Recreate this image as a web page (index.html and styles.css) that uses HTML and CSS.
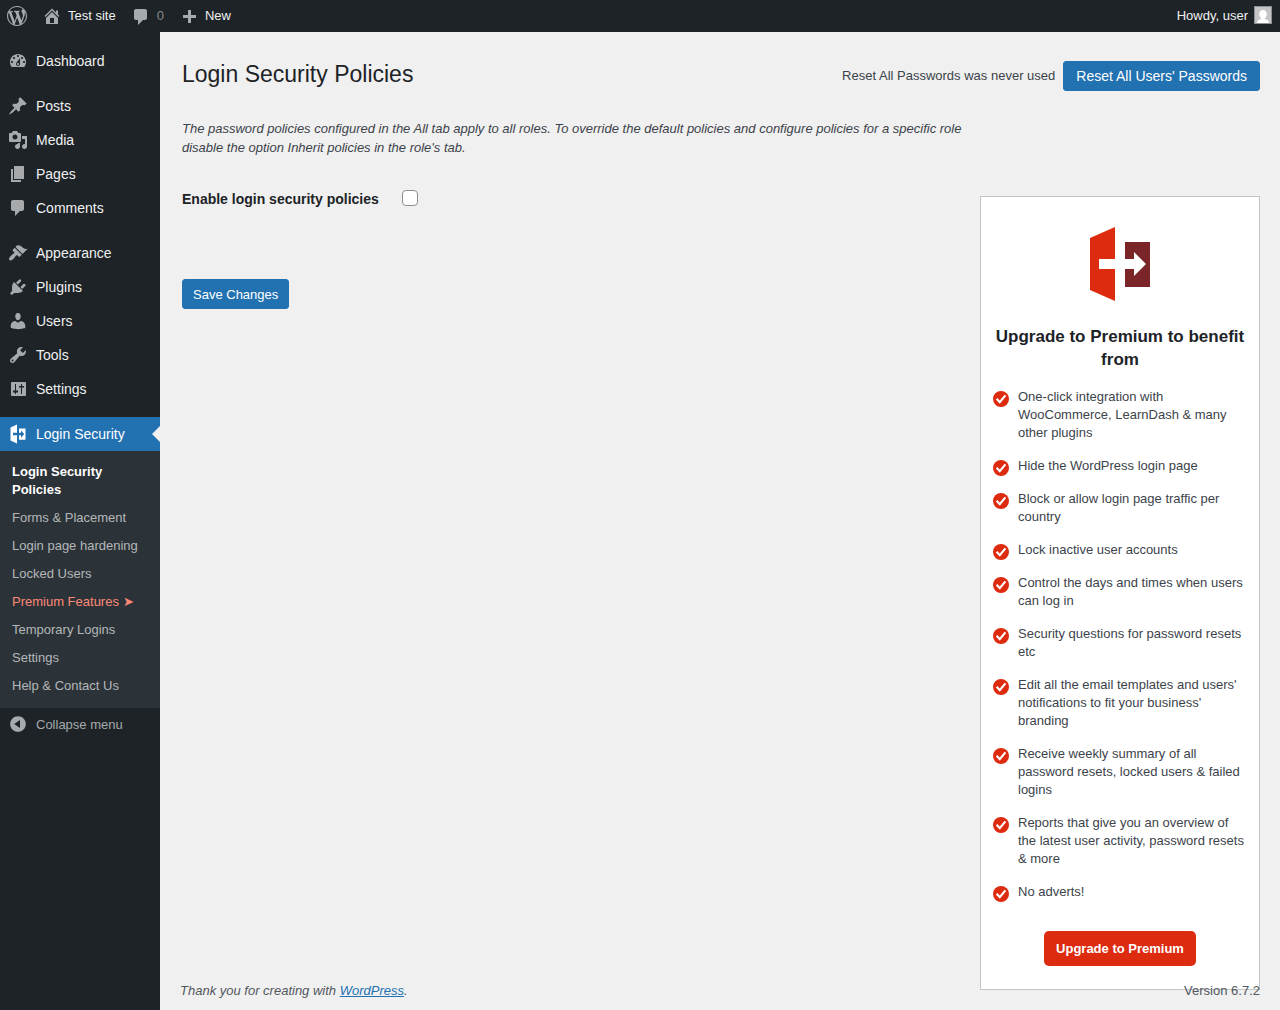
FILE: index.html
```html
<!DOCTYPE html>
<html lang="en">
<head>
    <meta charset="UTF-8">
    <meta name="viewport" content="width=device-width, initial-scale=1.0">
    <title>Login Security Policies - Test site</title>
    <link rel="stylesheet" href="styles.css">
</head>
<body>
    <svg class="sprite" aria-hidden="true">
        <symbol id="check" viewBox="0 0 16 16">
            <circle cx="8" cy="8" r="8" fill="#dd2b10"/>
            <path d="M3.600 7.800l3.200 3.400L12.400 4.400" fill="none" stroke="#fff" stroke-width="2.200"/>
        </symbol>
    </svg>

    <header class="adminbar">
        <nav class="adminbar-left">
            <a href="#" aria-label="About WordPress"><svg viewBox="0 0 20 20"><path d="M20 10c0-5.51-4.49-10-10-10C4.48 0 0 4.49 0 10c0 5.52 4.48 10 10 10 5.51 0 10-4.48 10-10zM7.78 15.37L4.37 6.22c.55-.02 1.17-.08 1.17-.08.5-.06.44-1.13-.06-1.11 0 0-1.45.11-2.37.11-.18 0-.37 0-.58-.01C4.12 2.69 6.87 1.11 10 1.11c2.33 0 4.45.87 6.05 2.34-.68-.11-1.65.39-1.65 1.58 0 .74.45 1.36.9 2.1.35.61.55 1.36.55 2.46 0 1.49-1.4 5-1.4 5l-3.03-8.37c.54-.02.82-.17.82-.17.5-.05.44-1.25-.06-1.22 0 0-1.44.12-2.38.12-.87 0-2.33-.12-2.33-.12-.5-.03-.56 1.2-.06 1.22l.92.08 1.26 3.41zM17.41 10c.24-.64.74-1.87.43-4.25.7 1.29 1.05 2.71 1.05 4.25 0 3.29-1.73 6.24-4.4 7.78.97-2.59 1.94-5.2 2.92-7.78zM6.1 18.09C3.12 16.65 1.11 13.53 1.11 10c0-1.3.23-2.48.72-3.59C3.25 10.3 4.67 14.2 6.1 18.09zm4.03-6.63l2.58 6.98c-.86.29-1.76.45-2.71.45-.79 0-1.57-.11-2.29-.33.81-2.38 1.62-4.74 2.42-7.1z"/></svg></a>
            <a href="#"><svg viewBox="0 0 20 20"><path fill-rule="evenodd" d="M16 8.5l1.53 1.53-1.06 1.06L10 4.6l-6.47 6.49-1.06-1.06L10 2.5l4 4v-2h2v4zm-6-2.46l6 5.99V18H4v-5.97zM12 17v-5H8v5h4z"/></svg>Test site</a>
            <a href="#" class="dim"><svg viewBox="0 -1 20 20"><path d="M5 2h9c1.1 0 2 .9 2 2v7c0 1.1-.9 2-2 2h-2l-5 5v-5H5c-1.1 0-2-.9-2-2V4c0-1.1.9-2 2-2z"/></svg>0</a>
            <a href="#"><svg viewBox="0 0 20 20"><path d="M17 9v3h-5v5H9v-5H4V9h5V4h3v5z"/></svg>New</a>
        </nav>
        <a href="#" class="account">Howdy, user
            <svg viewBox="0 0 18 18"><path fill="#8c8f94" d="M0 0h18v18H0z"/><path fill="#c5c5c7" d="M1 1h16v16H1z"/><path fill="#fff" d="M9 4c2.4 0 3.8 1.7 3.8 4 0 1.700-.8 3.200-1.800 4v1c2 .6 3.500 1.400 4 4H3c.5-2.600 2-3.400 4-4v-1c-1-.8-1.800-2.300-1.800-4C5.200 5.700 6.600 4 9 4z"/></svg>
        </a>
    </header>

    <div class="layout">
        <nav class="adminmenu">
            <a href="#"><svg viewBox="0 0 20 20"><path fill-rule="evenodd" d="M3.76 16h12.48c1.1-1.37 1.76-3.11 1.76-5 0-4.42-3.58-8-8-8s-8 3.58-8 8c0 1.89.66 3.63 1.76 5zM10 4c.55 0 1 .45 1 1s-.45 1-1 1-1-.45-1-1 .45-1 1-1zM6 6c.55 0 1 .45 1 1s-.45 1-1 1-1-.45-1-1 .45-1 1-1zm8 0c.55 0 1 .45 1 1s-.45 1-1 1-1-.45-1-1 .45-1 1-1zm-5.37 5.55L12 7v6c0 1.1-.9 2-2 2s-2-.9-2-2c0-.57.24-1.08.63-1.45zM4 10c.55 0 1 .45 1 1s-.45 1-1 1-1-.45-1-1 .45-1 1-1zm12 0c.55 0 1 .45 1 1s-.45 1-1 1-1-.45-1-1 .45-1 1-1zm-5 3c0-.55-.45-1-1-1s-1 .45-1 1 .45 1 1 1 1-.45 1-1z"/></svg>Dashboard</a>
            <div class="separator"></div>
            <a href="#"><svg viewBox="0 0 20 20"><path d="M10.44 3.02l1.82-1.82 6.36 6.35-1.83 1.82c-1.05-.68-2.48-.57-3.41.36l-.75.75c-.92.93-1.04 2.35-.35 3.41l-1.83 1.82-2.41-2.41-2.8 2.79c-.42.42-3.38 2.71-3.8 2.29s1.86-3.39 2.28-3.81l2.79-2.79L4.1 9.36l1.83-1.82c1.05.69 2.48.57 3.4-.36l.75-.75c.93-.92 1.05-2.35.36-3.41z"/></svg>Posts</a>
            <a href="#"><svg viewBox="0 0 20 20"><path fill-rule="evenodd" d="M13 11V4c0-.55-.45-1-1-1h-1.670L9 1H5L3.670 3H2c-.55 0-1 .45-1 1v7c0 .55.45 1 1 1h10c.55 0 1-.45 1-1zM7 4.500c1.380 0 2.500 1.120 2.500 2.500S8.380 9.500 7 9.500 4.500 8.380 4.500 7 5.620 4.500 7 4.500zM14 6h5v10.500c0 1.380-1.120 2.500-2.500 2.500S14 17.880 14 16.500s1.120-2.500 2.500-2.500c.17 0 .34.02.5.05V9h-3V6zm-4 8.050V13h2v3.500c0 1.380-1.120 2.500-2.500 2.500S7 17.880 7 16.500 8.120 14 9.500 14c.17 0 .34.02.5.05z"/></svg>Media</a>
            <a href="#"><svg viewBox="0 0 20 20"><path d="M6 15V2h10v13H6zm-1 1h8v2H3V5h2v11z"/></svg>Pages</a>
            <a href="#"><svg viewBox="0 0 20 20"><path d="M5 2h9c1.100 0 2 .9 2 2v7c0 1.100-.9 2-2 2h-2l-5 5v-5H5c-1.100 0-2-.9-2-2V4c0-1.100.9-2 2-2z"/></svg>Comments</a>
            <div class="separator"></div>
            <a href="#"><svg viewBox="0 0 20 20"><path d="M14.48 11.06L7.41 3.99l1.5-1.5c.5-.56 2.3-.47 3.51.32 1.21.8 1.43 1.28 2.91 2.1 1.18.64 2.45 1.26 4.45.85zm-.71.71L6.7 4.7 4.93 6.47c-.39.39-.39 1.02 0 1.41l1.06 1.06c.39.39.39 1.03 0 1.42-.6.6-1.43 1.11-2.21 1.69-.35.26-.7.53-1.01.84C1.43 14.23.4 16.08 1.4 17.07c.99 1 2.84-.03 4.18-1.36.31-.31.58-.66.85-1.02.57-.78 1.08-1.61 1.69-2.21.39-.39 1.02-.39 1.41 0l1.06 1.06c.39.39 1.02.39 1.41 0z"/></svg>Appearance</a>
            <a href="#"><svg viewBox="0 0 20 20"><path d="M13.11 4.36L9.87 7.6 8 5.73l3.24-3.24c.35-.34 1.05-.2 1.56.32.52.51.66 1.21.31 1.55zm-8 1.77l.91-1.12 9.01 9.01-1.19.84c-.71.71-2.63 1.16-3.82 1.16H6.14L4.9 17.26c-.59.59-1.54.59-2.12 0-.59-.58-.59-1.53 0-2.12l1.24-1.24v-3.88c0-1.13.4-3.19 1.09-3.89zm7.26 3.97l3.24-3.24c.34-.35 1.04-.21 1.55.31.52.51.66 1.21.31 1.55l-3.24 3.25z"/></svg>Plugins</a>
            <a href="#"><svg viewBox="0 0 20 20"><path d="M10 9.25c-2.27 0-2.73-3.44-2.73-3.44C7 4.02 7.82 2 9.97 2c2.16 0 2.98 2.02 2.71 3.81 0 0-.41 3.44-2.68 3.44zm0 2.57L12.72 10c2.39 0 4.52 2.33 4.52 4.53v2.49s-3.65 1.13-7.24 1.13c-3.65 0-7.24-1.13-7.24-1.13v-2.49c0-2.25 1.94-4.48 4.47-4.48z"/></svg>Users</a>
            <a href="#"><svg viewBox="0 0 20 20"><path fill-rule="evenodd" d="M16.68 9.77c-1.34 1.34-3.3 1.67-4.95.99l-5.41 6.52c-.99.99-2.59.99-3.58 0s-.99-2.59 0-3.57l6.52-5.42c-.68-1.65-.35-3.61.99-4.95 1.28-1.28 3.12-1.62 4.72-1.06l-2.89 2.89 2.82 2.82 2.86-2.87c.53 1.58.18 3.39-1.08 4.65zM3.81 16.21c.4.39 1.04.39 1.43 0 .4-.4.4-1.04 0-1.43-.39-.4-1.03-.4-1.43 0-.39.39-.39 1.03 0 1.43z"/></svg>Tools</a>
            <a href="#"><svg viewBox="0 0 20 20"><path fill-rule="evenodd" d="M4 3h13c.55 0 1 .45 1 1v12c0 .55-.45 1-1 1H4c-.55 0-1-.45-1-1V4c0-.55.45-1 1-1zM7 5v6.500H5v2h2V15h1v-1.500h2v-2H8V5zM13 5v2h-2v1.500h2V15h1V8.500h2V7h-2V5z"/></svg>Settings</a>
            <div class="separator"></div>
            <a href="#" class="current"><svg viewBox="0 0 20 20"><path d="M2.500 3.400L9 .5v8.200H5v2.600h4v8.200L2.500 16.600zM11 4.500h6.500v11.200H11v-4.400h2v2.400l3.200-3.700L13 6.500v2.200h-2z"/></svg>Login Security</a>
            <div class="submenu">
                <a href="#" class="active">Login Security Policies</a>
                <a href="#">Forms &amp; Placement</a>
                <a href="#">Login page hardening</a>
                <a href="#">Locked Users</a>
                <a href="#" class="premium">Premium Features ➤</a>
                <a href="#">Temporary Logins</a>
                <a href="#">Settings</a>
                <a href="#">Help &amp; Contact Us</a>
            </div>
            <button type="button" class="collapse"><svg viewBox="0 0 20 20"><path fill-rule="evenodd" d="M10 2.160c4.330 0 7.840 3.510 7.840 7.840s-3.510 7.840-7.840 7.840S2.160 14.330 2.160 10 5.710 2.160 10 2.160zm2 11.720V6.120L6.180 9.970z"/></svg>Collapse menu</button>
        </nav>

        <main class="content">
            <div class="page-head">
                <h1>Login Security Policies</h1>
                <span>Reset All Passwords was never used</span>
                <button type="button" class="button button-large">Reset All Users' Passwords</button>
            </div>

            <div class="columns">
                <form class="policies">
                    <p class="description">The password policies configured in the All tab apply to all roles. To override the default policies and configure policies for a specific role disable the option Inherit policies in the role's tab.</p>
                    <div class="field">
                        <label for="enable-policies">Enable login security policies</label>
                        <input type="checkbox" id="enable-policies">
                    </div>
                    <button type="submit" class="button">Save Changes</button>
                </form>

                <aside class="upgrade">
                    <svg class="logo" viewBox="0 0 62 76">
                        <path fill="#dd2b10" d="M1 12L26 1v32H10v10h16v32L1 64z"/>
                        <path fill="#7c2529" d="M36 16h25v45H36V43h9v7l12-12-12-12v7h-9z"/>
                    </svg>
                    <h2>Upgrade to Premium to benefit from</h2>
                    <ul>
                        <li><svg><use href="#check"/></svg>One-click integration with WooCommerce, LearnDash &amp; many other plugins</li>
                        <li><svg><use href="#check"/></svg>Hide the WordPress login page</li>
                        <li><svg><use href="#check"/></svg>Block or allow login page traffic per country</li>
                        <li><svg><use href="#check"/></svg>Lock inactive user accounts</li>
                        <li><svg><use href="#check"/></svg>Control the days and times when users can log in</li>
                        <li><svg><use href="#check"/></svg>Security questions for password resets etc</li>
                        <li><svg><use href="#check"/></svg>Edit all the email templates and users' notifications to fit your business' branding</li>
                        <li><svg><use href="#check"/></svg>Receive weekly summary of all password resets, locked users &amp; failed logins</li>
                        <li><svg><use href="#check"/></svg>Reports that give you an overview of the latest user activity, password resets &amp; more</li>
                        <li><svg><use href="#check"/></svg>No adverts!</li>
                    </ul>
                    <a href="#" class="upgrade-button">Upgrade to Premium</a>
                </aside>
            </div>

            <footer>
                <em>Thank you for creating with <a href="#">WordPress</a>.</em>
                <span>Version 6.7.2</span>
            </footer>
        </main>
    </div>
</body>
</html>
```
FILE: styles.css
```css
* {
    box-sizing: border-box;
}
body {
    margin: 0;
    background: #f0f0f0;
    color: #3c434a;
    font: 13px/19px "Liberation Sans", Arial, sans-serif;
}
button {
    font-family: inherit;
    cursor: pointer;
}
.sprite {
    display: none;
}

/* Top bar */
.adminbar {
    display: flex;
    justify-content: space-between;
    height: 32px;
    padding: 0 8px 0 7px;
    background: #1d2327;
    line-height: 32px;
}
.adminbar-left {
    display: flex;
    gap: 15px;
}
.adminbar a {
    display: flex;
    align-items: center;
    gap: 6px;
    color: #f0f0f1;
    text-decoration: none;
}
.adminbar svg {
    width: 20px;
    height: 20px;
    fill: #a7aaad;
}
.adminbar .dim {
    color: #878b8f;
}
.adminbar .account svg {
    width: 18px;
    height: 18px;
    margin-bottom: 2px;
}

/* Side menu */
.layout {
    display: flex;
    min-height: calc(100vh - 32px);
}
.adminmenu {
    flex: 0 0 160px;
    padding-top: 12px;
    background: #1d2327;
}
.adminmenu > a,
.collapse {
    display: flex;
    align-items: center;
    gap: 8px;
    width: 100%;
    height: 34px;
    padding: 0 8px;
    color: #f0f0f1;
    font-size: 14px;
    text-decoration: none;
}
.adminmenu svg {
    width: 20px;
    height: 20px;
    fill: #a7aaad;
}
.separator {
    height: 11px;
}
.adminmenu > .current {
    position: relative;
    background: #2271b1;
    color: #fff;
}
.adminmenu .current svg {
    fill: #fff;
}
.current::after {
    content: "";
    position: absolute;
    top: 9px;
    right: 0;
    border: 8px solid transparent;
    border-left-width: 0;
    border-right-color: #f0f0f0;
}
.submenu {
    padding: 7px 0 8px;
    background: #2c3338;
}
.submenu a {
    display: block;
    padding: 5px 12px;
    color: #b4b7b9;
    line-height: 18px;
    text-decoration: none;
}
.submenu .active {
    color: #fff;
    font-weight: bold;
}
.submenu .premium {
    color: #ff8977;
}
.collapse {
    height: 32px;
    border: none;
    background: none;
    color: #a7aaad;
    font-size: 13px;
}

/* Page */
.content {
    position: relative;
    flex: 1;
    min-width: 0;
    padding: 29px 20px 20px 22px;
}
.page-head {
    display: flex;
    align-items: center;
    gap: 8px;
    margin-bottom: 28px;
    line-height: 18px;
}
h1 {
    flex: 1;
    margin: 0;
    padding-bottom: 4px;
    color: #1d2327;
    font-size: 23px;
    font-weight: normal;
    line-height: 26px;
}
.button {
    height: 30px;
    padding: 0 10px;
    border: 1px solid #2271b1;
    border-radius: 3px;
    background: #2271b1;
    color: #fff;
    font-size: 13px;
}
.button-large {
    padding: 0 12px;
    font-size: 14px;
}
.columns {
    display: flex;
    align-items: flex-start;
    gap: 10px;
}
.policies {
    flex: 1;
}
.description {
    margin: 0 0 33px;
    font-style: italic;
}
.field {
    display: flex;
    align-items: flex-start;
    margin-bottom: 70px;
}
.field label {
    width: 220px;
    color: #1d2327;
    font-size: 14px;
    font-weight: bold;
}
.field input {
    appearance: none;
    width: 16px;
    height: 16px;
    margin: 0;
    border: 1px solid #8c8f94;
    border-radius: 4px;
    background: #fff;
}

/* Upgrade box */
.upgrade {
    width: 280px;
    margin-top: 77px;
    padding: 29px 12px 23px;
    border: 1px solid #c3c4c7;
    background: #fff;
    text-align: center;
}
.logo {
    display: block;
    width: 62px;
    height: 76px;
    margin: 0 auto 23px;
}
h2 {
    margin: 0 0 17px;
    color: #1d2327;
    font-size: 17px;
    line-height: 23px;
}
.upgrade ul {
    display: grid;
    gap: 15px;
    margin: 0 0 30px;
    padding: 0;
    list-style: none;
    line-height: 18px;
    text-align: left;
}
.upgrade li {
    display: flex;
    gap: 9px;
}
.upgrade li svg {
    flex: none;
    width: 16px;
    height: 16px;
    margin: 3px 0 -1px;
}
.upgrade-button {
    display: inline-block;
    padding: 8px 12px;
    border-radius: 5px;
    background: #dd2b10;
    color: #fff;
    font-weight: bold;
    text-decoration: none;
    vertical-align: top;
}

/* The footer lies over the bottom of the page content */
footer {
    position: absolute;
    right: 0;
    bottom: 0;
    left: 0;
    display: flex;
    justify-content: space-between;
    padding: 10px 20px;
    color: #50575e;
}
footer a {
    color: #2271b1;
}
```
